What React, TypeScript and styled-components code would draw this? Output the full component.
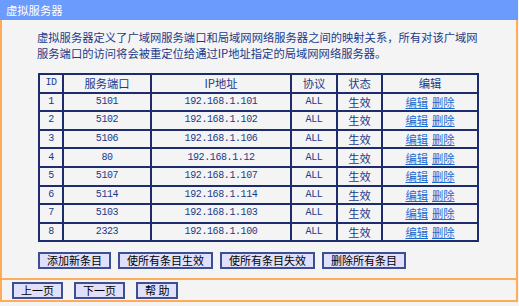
import React from "react";
import styled, { createGlobalStyle } from "styled-components";

const GlobalStyle = createGlobalStyle`
  body {
    margin: 0;
    background: #f4f4f4;
    font-family: "Noto Sans CJK SC", sans-serif;
  }
`;

const Panel = styled.div`
  width: 518px;
`;

const TitleBar = styled.div`
  height: 20px;
  line-height: 20px;
  padding-left: 6px;
  background: #6a9bfd;
  color: #ffffff;
  font-size: 11.3px;
`;

const Content = styled.div`
  border-left: 2px solid #ffab57;
  border-right: 2px solid #ffab57;
  padding: 9px 0 9px 35px;
`;

const Intro = styled.p`
  margin: 0;
  font-size: 11.3px;
  line-height: 16px;
  color: #1b3a8a;
  white-space: nowrap;
`;

const Table = styled.table`
  margin: 12px 0 0 1px;
  border-collapse: collapse;
  table-layout: fixed;
`;

const Cell = styled.td<{ $mono?: boolean }>`
  border: 2px solid #1c2c6c;
  height: 16.6px;
  padding: 0;
  text-align: center;
  vertical-align: middle;
  line-height: 16px;
  color: #1b3a8a;
  white-space: nowrap;
  font-family: ${(p) =>
    p.$mono
      ? '"Liberation Mono", "Noto Sans CJK SC", monospace'
      : '"Noto Sans CJK SC", sans-serif'};
  font-size: ${(p) => (p.$mono ? "10px" : "11.3px")};
  letter-spacing: ${(p) => (p.$mono ? "-0.4px" : "0")};
`;

const HeadCell = styled(Cell).attrs({ as: "th" })`
  font-weight: normal;
`;

const Link = styled.a`
  color: #1a6cd4;
  text-decoration: underline;
  margin: 0 2px;
  cursor: pointer;
`;

const ButtonRow = styled.div`
  display: flex;
  gap: 7px;
  margin: 10px 0 0 1px;
`;

const Button = styled.button`
  height: 17px;
  padding: 0 7px;
  border: 2px solid #3d4f93;
  background: #e0e0fd;
  color: #000000;
  font-family: "Noto Sans CJK SC", sans-serif;
  font-size: 11px;
  line-height: 13px;
  white-space: pre;
`;

const Footer = styled.div`
  display: flex;
  gap: 11px;
  border: 2px solid #ffab57;
  padding: 2px 0 1px 10px;
`;

const columns = [24, 88, 140, 46, 45, 96];

const rules = [
  ["1", "5101", "192.168.1.101"],
  ["2", "5102", "192.168.1.102"],
  ["3", "5106", "192.168.1.106"],
  ["4", "80", "192.168.1.12"],
  ["5", "5107", "192.168.1.107"],
  ["6", "5114", "192.168.1.114"],
  ["7", "5103", "192.168.1.103"],
  ["8", "2323", "192.168.1.100"],
];

export default function App() {
  return (
    <Panel>
      <GlobalStyle />
      <TitleBar>虚拟服务器</TitleBar>
      <Content>
        <Intro>
          虚拟服务器定义了广域网服务端口和局域网网络服务器之间的映射关系，所有对该广域网
          <br />
          服务端口的访问将会被重定位给通过IP地址指定的局域网网络服务器。
        </Intro>
        <Table>
          <colgroup>
            {columns.map((w, i) => (
              <col key={i} style={{ width: w }} />
            ))}
          </colgroup>
          <thead>
            <tr>
              <HeadCell $mono>ID</HeadCell>
              <HeadCell>服务端口</HeadCell>
              <HeadCell>IP地址</HeadCell>
              <HeadCell>协议</HeadCell>
              <HeadCell>状态</HeadCell>
              <HeadCell>编辑</HeadCell>
            </tr>
          </thead>
          <tbody>
            {rules.map(([id, port, ip]) => (
              <tr key={id}>
                <Cell $mono>{id}</Cell>
                <Cell $mono>{port}</Cell>
                <Cell $mono>{ip}</Cell>
                <Cell $mono>ALL</Cell>
                <Cell>生效</Cell>
                <Cell>
                  <Link>编辑</Link>
                  <Link>删除</Link>
                </Cell>
              </tr>
            ))}
          </tbody>
        </Table>
        <ButtonRow>
          <Button>添加新条目</Button>
          <Button>使所有条目生效</Button>
          <Button>使所有条目失效</Button>
          <Button>删除所有条目</Button>
        </ButtonRow>
      </Content>
      <Footer>
        <Button>上一页</Button>
        <Button>下一页</Button>
        <Button>帮 助</Button>
      </Footer>
    </Panel>
  );
}
